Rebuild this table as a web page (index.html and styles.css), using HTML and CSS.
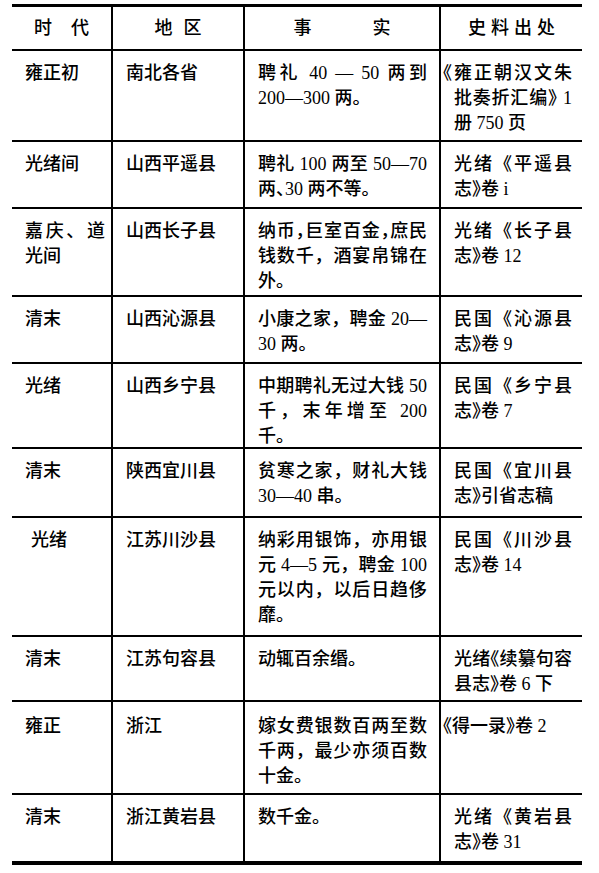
FILE: index.html
```html
<!DOCTYPE html>
<html lang="zh-CN">
<head>
<meta charset="utf-8">
<title>聘礼表</title>
<link rel="stylesheet" href="styles.css">
</head>
<body>
<div class="tbl">
  <div class="c h k1"><span class="s1">时代</span></div>
  <div class="c h k2"><span class="s2">地区</span></div>
  <div class="c h k3"><span class="s3">事实</span></div>
  <div class="c h k4"><span class="s4">史料出处</span></div>

  <div class="c k1"><div class="ln">雍正初</div></div>
  <div class="c k2"><div class="ln">南北各省</div></div>
  <div class="c k3"><div class="ln j">聘礼 40 — 50 两到</div><div class="ln">200—300 两。</div></div>
  <div class="c k4"><div class="ln j"><span class="hw hang">《</span>雍正朝汉文朱</div><div class="ln j">批奏折汇编<span class="hw">》</span> 1</div><div class="ln">册 750 页</div></div>

  <div class="c k1"><div class="ln">光绪间</div></div>
  <div class="c k2"><div class="ln">山西平遥县</div></div>
  <div class="c k3"><div class="ln j">聘礼 100 两至 50—70</div><div class="ln">两<span class="hw">、</span>30 两不等。</div></div>
  <div class="c k4"><div class="ln j">光绪《平遥县</div><div class="ln">志<span class="hw">》</span>卷 i</div></div>

  <div class="c k1"><div class="ln j">嘉庆、道</div><div class="ln">光间</div></div>
  <div class="c k2"><div class="ln">山西长子县</div></div>
  <div class="c k3"><div class="ln j">纳币<span class="hw">，</span>巨室百金<span class="hw">，</span>庶民</div><div class="ln j">钱数千，酒宴帛锦在</div><div class="ln">外。</div></div>
  <div class="c k4"><div class="ln j">光绪《长子县</div><div class="ln">志<span class="hw">》</span>卷 12</div></div>

  <div class="c k1"><div class="ln">清末</div></div>
  <div class="c k2"><div class="ln">山西沁源县</div></div>
  <div class="c k3"><div class="ln j">小康之家，聘金 20—</div><div class="ln">30 两。</div></div>
  <div class="c k4"><div class="ln j">民国《沁源县</div><div class="ln">志<span class="hw">》</span>卷 9</div></div>

  <div class="c k1"><div class="ln">光绪</div></div>
  <div class="c k2"><div class="ln">山西乡宁县</div></div>
  <div class="c k3"><div class="ln j">中期聘礼无过大钱 50</div><div class="ln j">千，末年增至 200</div><div class="ln">千。</div></div>
  <div class="c k4"><div class="ln j">民国《乡宁县</div><div class="ln">志<span class="hw">》</span>卷 7</div></div>

  <div class="c k1"><div class="ln">清末</div></div>
  <div class="c k2"><div class="ln">陕西宜川县</div></div>
  <div class="c k3"><div class="ln j">贫寒之家，财礼大钱</div><div class="ln">30—40 串。</div></div>
  <div class="c k4"><div class="ln j">民国《宜川县</div><div class="ln">志<span class="hw">》</span>引省志稿</div></div>

  <div class="c k1"><div class="ln in">光绪</div></div>
  <div class="c k2"><div class="ln">江苏川沙县</div></div>
  <div class="c k3"><div class="ln j">纳彩用银饰，亦用银</div><div class="ln j">元 4—5 元，聘金 100</div><div class="ln j">元以内，以后日趋侈</div><div class="ln">靡。</div></div>
  <div class="c k4"><div class="ln j">民国《川沙县</div><div class="ln">志<span class="hw">》</span>卷 14</div></div>

  <div class="c k1"><div class="ln">清末</div></div>
  <div class="c k2"><div class="ln">江苏句容县</div></div>
  <div class="c k3"><div class="ln">动辄百余缗。</div></div>
  <div class="c k4"><div class="ln j">光绪<span class="hw">《</span>续纂句容</div><div class="ln">县志<span class="hw">》</span>卷 6 下</div></div>

  <div class="c k1 tall"><div class="ln">雍正</div></div>
  <div class="c k2 tall"><div class="ln">浙江</div></div>
  <div class="c k3 tall"><div class="ln j">嫁女费银数百两至数</div><div class="ln j">千两，最少亦须百数</div><div class="ln">十金。</div></div>
  <div class="c k4 tall"><div class="ln"><span class="hw hang">《</span>得一录<span class="hw">》</span>卷 2</div></div>

  <div class="c k1 last"><div class="ln">清末</div></div>
  <div class="c k2 last"><div class="ln">浙江黄岩县</div></div>
  <div class="c k3 last"><div class="ln">数千金。</div></div>
  <div class="c k4 last"><div class="ln j">光绪《黄岩县</div><div class="ln">志<span class="hw">》</span>卷 31</div></div>
</div>
</body>
</html>
```

FILE: styles.css
```css
html, body {
  margin: 0;
  padding: 0;
  background: #ffffff;
}

body {
  font-family: "Liberation Serif", "Noto Sans CJK SC", serif;
  font-size: 18px;
  font-weight: 500;
  color: #000000;
}

.tbl {
  margin: 4px 0 0 12px;
  width: 570px;
  display: grid;
  grid-template-columns: 101px 132px 196px 141px;
  grid-template-rows: 44px 91px 67px 88px 67px 85px 69px 119px 65px 93px 66px;
  border-top: 3px solid #000;
  border-bottom: 4px solid #000;
}

.c {
  box-sizing: border-box;
  border-bottom: 2px solid #000;
  border-right: 2px solid #000;
  padding-top: 10px;
  line-height: 25px;
}

.c.tall {
  padding-top: 12px;
}

.c.last {
  border-bottom: none;
}

.k1 { padding-left: 13px; padding-right: 6px; }
.k2 { padding-left: 13px; padding-right: 8px; }
.k3 { padding-left: 13px; padding-right: 12px; }
.k4 { padding-left: 13px; padding-right: 10px; border-right: none; }

.h {
  display: flex;
  align-items: center;
  justify-content: center;
  padding: 0;
}

.s1 { letter-spacing: 19px; margin-right: -19px; }
.s2 { letter-spacing: 11px; margin-right: -11px; }
.s3 { letter-spacing: 61px; margin-right: -61px; }
.s4 { letter-spacing: 5px; margin-right: -5px; }

.ln {
  white-space: nowrap;
}

.ln.j {
  text-align: justify;
  text-align-last: justify;
}

.ln.in {
  padding-left: 6px;
}

.hw {
  font-feature-settings: "halt" 1;
}

.hang {
  margin-left: -11px;
}
```
